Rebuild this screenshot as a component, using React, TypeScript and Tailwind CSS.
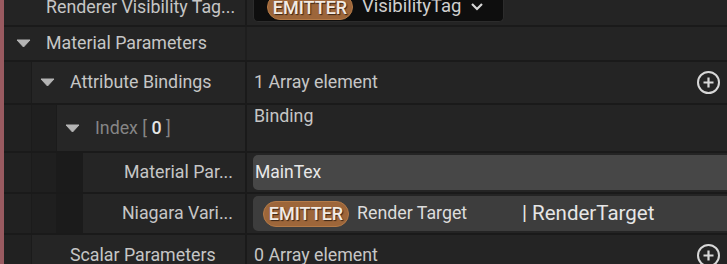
import React from "react";

const font = { fontFamily: "Roboto, 'Noto Sans', sans-serif" };

function Tri() {
  return (
    <svg width="15" height="9" viewBox="0 0 15 9" className="shrink-0">
      <path d="M1 1 H14 L7.5 8 Z" fill="#b4b4b4" stroke="#b4b4b4" strokeWidth="1" strokeLinejoin="round" />
    </svg>
  );
}

function PlusCircle() {
  return (
    <svg width="25" height="25" viewBox="0 0 25 25" className="shrink-0">
      <circle cx="12.5" cy="12.5" r="10.5" fill="none" stroke="#d8d8d8" strokeWidth="2" />
      <path d="M12.5 7.5 V17.5 M7.5 12.5 H17.5" stroke="#d8d8d8" strokeWidth="2.2" />
    </svg>
  );
}

function Emitter() {
  return (
    <span className="flex h-[26px] w-[86px] shrink-0 items-center justify-center rounded-full border border-[#b47a47] bg-[#9d663a] text-[18px] font-medium text-[#f2ebe4] [text-shadow:1px_1px_1px_#3a2414]">
      EMITTER
    </span>
  );
}

function Indent({ cols }: { cols: string[] }) {
  return (
    <>
      {cols.map((c, i) => (
        <div key={i} className={`shrink-0 border-r border-[#1b1b1b] ${c}`} />
      ))}
    </>
  );
}

export default function App() {
  return (
    <div className="h-[264px] w-[727px] overflow-hidden bg-[#1a1a1a] text-[17.8px] text-[#c6c6c6]" style={font}>
      <div className="flex h-full">
        <div className="w-[4px] shrink-0 bg-[#995a60]" />
        <div className="-mt-[11px] flex min-w-0 flex-1 flex-col gap-[2px]">
          {/* Renderer Visibility Tag */}
          <div className="flex h-[36px] shrink-0 bg-[#242424]">
            <div className="flex w-[241px] shrink-0 items-center whitespace-nowrap pl-[42px]">
              Renderer Visibility Tag...
            </div>
            <div className="w-[2px] shrink-0 bg-[#1a1a1a]" />
            <div className="flex-1 pl-[6px]">
              <div className="flex h-[33px] w-[251px] items-center gap-[9px] rounded-b-[5px] border border-t-0 border-[#2c2c2c] bg-[#0e0e0e] pl-[13px] pt-[4px]">
                <Emitter />
                <span className="text-[18.5px] text-[#cfcfcf]">VisibilityTag</span>
                <svg width="14" height="10" viewBox="0 0 14 10">
                  <path d="M2 2 L7 7 L12 2" fill="none" stroke="#d6d6d6" strokeWidth="2.2" />
                </svg>
              </div>
            </div>
          </div>

          {/* Material Parameters */}
          <div className="flex h-[33px] shrink-0 bg-[#242424]">
            <div className="flex w-[241px] shrink-0 items-center gap-[15px] pl-[12px]">
              <Tri />
              <span>Material Parameters</span>
            </div>
            <div className="w-[2px] shrink-0 bg-[#1e1e1e]" />
            <div className="flex-1" />
          </div>

          {/* Attribute Bindings */}
          <div className="flex h-[41px] shrink-0 bg-[#222222]">
            <div className="flex w-[241px] shrink-0">
              <Indent cols={["w-[28px] bg-[#212121]"]} />
              <div className="flex flex-1 items-center gap-[15px] bg-[#252525] pl-[8px]">
                <Tri />
                <span>Attribute Bindings</span>
              </div>
            </div>
            <div className="w-[2px] shrink-0 bg-[#1a1a1a]" />
            <div className="flex flex-1 items-center justify-between bg-[#242424] pl-[7px] pr-[6px]">
              <span>1 Array element</span>
              <PlusCircle />
            </div>
          </div>

          {/* Index [0] */}
          <div className="flex h-[46px] shrink-0 bg-[#222222]">
            <div className="flex w-[241px] shrink-0">
              <Indent cols={["w-[28px] bg-[#212121]", "w-[25px] bg-[#1f1f1f]"]} />
              <div className="flex flex-1 items-center gap-[15px] bg-[#262626] pl-[8px] pt-[1px]">
                <Tri />
                <span className="text-[#858585]">
                  Index [ <span className="font-medium text-[#e4e4e4]">0</span> ]
                </span>
              </div>
            </div>
            <div className="w-[2px] shrink-0 bg-[#1a1a1a]" />
            <div className="flex-1 bg-[#242424] pl-[7px] leading-[22px]">Binding</div>
          </div>

          {/* Material Parameter Name */}
          <div className="flex h-[39px] shrink-0 bg-[#222222]">
            <div className="flex w-[241px] shrink-0">
              <Indent cols={["w-[28px] bg-[#212121]", "w-[25px] bg-[#1f1f1f]", "w-[26px] bg-[#1b1b1b]"]} />
              <div className="flex flex-1 items-center justify-end whitespace-nowrap bg-[#252525] pr-[12px]">
                Material Par...
              </div>
            </div>
            <div className="w-[2px] shrink-0 bg-[#1a1a1a]" />
            <div className="flex flex-1 items-center bg-[#242424] pl-[6px]">
              <div className="flex h-[35px] flex-1 items-center rounded-l-[5px] bg-[#474747] pl-[2px] text-[17.5px] text-[#e8e8e8]">
                MainTex
              </div>
            </div>
          </div>

          {/* Niagara Variable */}
          <div className="flex h-[39px] shrink-0 bg-[#222222]">
            <div className="flex w-[241px] shrink-0">
              <Indent cols={["w-[28px] bg-[#212121]", "w-[25px] bg-[#1f1f1f]", "w-[26px] bg-[#1b1b1b]"]} />
              <div className="flex flex-1 items-center justify-end whitespace-nowrap bg-[#252525] pr-[12px]">
                Niagara Vari...
              </div>
            </div>
            <div className="w-[2px] shrink-0 bg-[#1a1a1a]" />
            <div className="flex flex-1 items-center bg-[#242424] pl-[6px]">
              <div className="flex h-[35px] flex-1 items-center whitespace-nowrap rounded-l-[5px] bg-[#3d3d3d] pl-[10px] text-[#dcdcdc]">
                <Emitter />
                <span className="ml-[8px] w-[165px]">Render Target</span>
                <span className="text-[20.5px] text-[#e6e6e6]">| RenderTarget</span>
              </div>
            </div>
          </div>

          {/* Scalar Parameters */}
          <div className="flex h-[40px] shrink-0 bg-[#222222]">
            <div className="flex w-[241px] shrink-0">
              <Indent cols={["w-[28px] bg-[#212121]"]} />
              <div className="flex flex-1 items-center bg-[#252525] pl-[38px]">
                Scalar Parameters
              </div>
            </div>
            <div className="w-[2px] shrink-0 bg-[#1a1a1a]" />
            <div className="flex flex-1 items-center justify-between bg-[#242424] pl-[7px] pr-[6px]">
              <span>0 Array element</span>
              <PlusCircle />
            </div>
          </div>
        </div>
      </div>
    </div>
  );
}
